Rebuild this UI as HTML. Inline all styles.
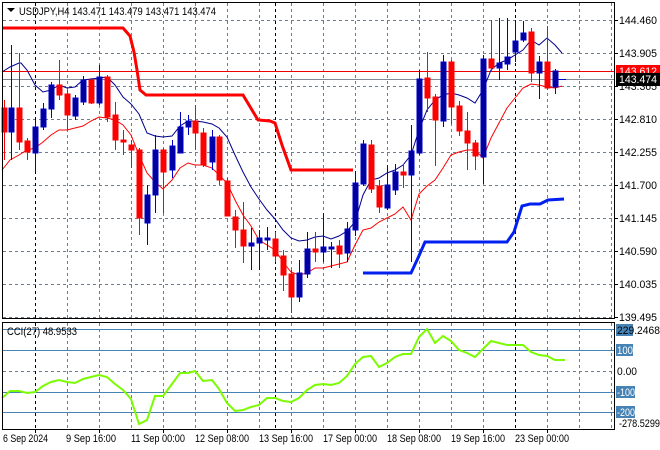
<!DOCTYPE html>
<html><head><meta charset="utf-8"><style>
html,body{margin:0;padding:0;background:#fff;}
svg{display:block;font-family:"Liberation Sans",sans-serif;}
</style></head><body>
<svg width="660" height="450" viewBox="0 0 660 450" xmlns="http://www.w3.org/2000/svg">
<rect width="660" height="450" fill="#fff"/>
<g stroke="#6f7c8c" stroke-width="1" stroke-dasharray="3,3" fill="none">
<path d="M3 20.5H614M3 53.5H614M3 86.5H614M3 119.5H614M3 152.5H614M3 185.5H614M3 218.5H614M3 251.5H614M3 284.5H614M3 317.5H614"/>
<path d="M67.5 3V318M99.5 3V318M131.5 3V318M163.5 3V318M195.5 3V318M227.5 3V318M259.5 3V318M291.5 3V318M323.5 3V318M355.5 3V318M387.5 3V318M419.5 3V318M451.5 3V318M483.5 3V318M547.5 3V318M579.5 3V318M611.5 3V318"/>
<path d="M67.5 323V428M99.5 323V428M131.5 323V428M163.5 323V428M195.5 323V428M227.5 323V428M259.5 323V428M291.5 323V428M323.5 323V428M355.5 323V428M387.5 323V428M419.5 323V428M451.5 323V428M483.5 323V428M547.5 323V428M579.5 323V428M611.5 323V428M3 371.5H614"/>
</g>
<g stroke="#000" stroke-width="1" stroke-dasharray="3,3">
<path d="M35.5 3V318M275.5 3V318M515.5 3V318M35.5 323V428M275.5 323V428M515.5 323V428"/>
</g>
<path d="M3 71.5H614" stroke="#e00" stroke-width="1"/>
<path d="M3 79.5H614" stroke="#7f8a96" stroke-width="1"/>
<polyline fill="none" stroke="#f00" stroke-width="3" points="3,28 123,28 130,36 134,52 137,70 140,90 146,95 243,95 252,110 258,120 270,121 275,123 282,145 291,170 353,170"/>
<polyline fill="none" stroke="#0020f0" stroke-width="3" points="363,273 411,273 418,258 425,242 507,242 514,232 522,206 530,204 540,204 548,200 564,199"/>
<polyline fill="none" stroke="#00008b" stroke-width="1" points="2,72 10,67 19,63 21,63 27,70 35,85 43,92 51,90 59,85 67,88 75,87 83,80 91,79 99,78 107,77 115,85 123,97 131,104 139,114 147,133 155,136 163,137 172,136 180,126 188,121 195,121 203,122 212,124 219,128 227,137 235,155 243,172 251,187 259,199 267,210 275,219 283,230 291,238 299,241 307,240 315,237 323,236 331,239 339,236 347,231 355,222 363,195 371,180 379,178 387,173 395,170 403,165 411,155 419,130 427,110 435,100 443,95 451,93 459,95 467,98 475,103 483,90 491,70 499,63 507,60 515,55 523,50 531,40 539,45 547,38 555,45 562,53"/>
<polyline fill="none" stroke="#f00" stroke-width="1" points="2,170 10,160 19,155 27,150 35,148 43,142 51,135 59,130 67,130 75,128 83,126 91,121 99,117 107,118 115,120 123,125 131,135 139,155 147,173 155,182 163,189 172,180 180,168 188,163 195,165 203,165 212,168 219,175 227,183 235,200 243,215 251,226 259,240 267,245 275,250 283,262 291,272 299,275 307,273 315,268 323,268 331,266 339,264 347,262 355,245 363,230 371,228 379,222 387,218 395,214 403,207 411,220 419,194 427,186 435,180 443,168 451,155 459,152 467,150 475,150 483,158 491,138 499,123 507,108 515,98 523,88 531,84 539,85 547,87 555,88 562,86"/>
<g stroke-width="1">
<g stroke="#f00" fill="#f00">
<path d="M4.5 100V160M19.5 53V150M27.5 138V160M59.5 60V100M67.5 90V130M91.5 78V104M107.5 75V122M115.5 102V150M123.5 130V155M131.5 140V168M139.5 148V235M163.5 148V213M195.5 105V150M203.5 128V167M219.5 135V185M227.5 178V205M235.5 210V248M243.5 202V263M275.5 232V262M283.5 250V291M291.5 270V313M315.5 232V262M339.5 240V268M371.5 140V193M379.5 180V213M403.5 164V188M427.5 52V112M435.5 94V166M451.5 60V124M459.5 101V136M467.5 112V170M475.5 140V170M491.5 20V72M531.5 28V82M547.5 26V90"/>
<rect x="2" y="108" width="5" height="24"/><rect x="17" y="108" width="5" height="34"/><rect x="25" y="141" width="5" height="11"/><rect x="57" y="85" width="5" height="10"/><rect x="65" y="94" width="5" height="21"/><rect x="89" y="80" width="5" height="23"/><rect x="105" y="77" width="5" height="40"/><rect x="113" y="115" width="5" height="25"/><rect x="121" y="140" width="5" height="2"/><rect x="129" y="145" width="5" height="5"/><rect x="137" y="150" width="5" height="68"/><rect x="161" y="150" width="5" height="22"/><rect x="193" y="121" width="5" height="12"/><rect x="201" y="133" width="5" height="32"/><rect x="217" y="137" width="5" height="43"/><rect x="225" y="181" width="5" height="35"/><rect x="233" y="217" width="5" height="13"/><rect x="241" y="230" width="5" height="16"/><rect x="273" y="239" width="5" height="17"/><rect x="281" y="256" width="5" height="19"/><rect x="289" y="274" width="5" height="23"/><rect x="313" y="249" width="5" height="3"/><rect x="337" y="246" width="5" height="8"/><rect x="369" y="145" width="5" height="44"/><rect x="377" y="186" width="5" height="21"/><rect x="401" y="172" width="5" height="3"/><rect x="425" y="78" width="5" height="20"/><rect x="433" y="97" width="5" height="23"/><rect x="449" y="62" width="5" height="45"/><rect x="457" y="106" width="5" height="25"/><rect x="465" y="131" width="5" height="12"/><rect x="473" y="143" width="5" height="13"/><rect x="489" y="59" width="5" height="9"/><rect x="529" y="32" width="5" height="41"/><rect x="545" y="62" width="5" height="26"/>
</g>
<g stroke="#0000c8" fill="#0000a0">
<path d="M11.5 45V160M35.5 120V172M43.5 103V130M51.5 82V118M75.5 95V120M83.5 76V105M99.5 65V105M147.5 185V245M155.5 135V213M172.5 140V178M180.5 112V153M188.5 115V135M212.5 130V170M251.5 228V270M259.5 230V270M267.5 227V250M299.5 260V302M307.5 232V278M323.5 213V262M331.5 242V268M347.5 222V262M355.5 171V236M363.5 140V186M387.5 165V210M395.5 164V195M411.5 125V262M419.5 70V155M443.5 55V127M483.5 55V184M499.5 18V80M507.5 18V70M515.5 20V62M523.5 21V42M539.5 56V99M555.5 69V94"/>
<rect x="9" y="108" width="5" height="24"/><rect x="33" y="127" width="5" height="26"/><rect x="41" y="109" width="5" height="18"/><rect x="49" y="85" width="5" height="24"/><rect x="73" y="98" width="5" height="18"/><rect x="81" y="80" width="5" height="22"/><rect x="97" y="77" width="5" height="26"/><rect x="145" y="195" width="5" height="28"/><rect x="153" y="150" width="5" height="45"/><rect x="170" y="146" width="5" height="24"/><rect x="178" y="127" width="5" height="26"/><rect x="186" y="121" width="5" height="6"/><rect x="210" y="137" width="5" height="25"/><rect x="249" y="243" width="5" height="3"/><rect x="257" y="238" width="5" height="5"/><rect x="265" y="238" width="5" height="2"/><rect x="297" y="273" width="5" height="24"/><rect x="305" y="249" width="5" height="25"/><rect x="321" y="247" width="5" height="5"/><rect x="329" y="247" width="5" height="2"/><rect x="345" y="229" width="5" height="24"/><rect x="353" y="183" width="5" height="47"/><rect x="361" y="144" width="5" height="40"/><rect x="385" y="185" width="5" height="23"/><rect x="393" y="172" width="5" height="18"/><rect x="409" y="151" width="5" height="24"/><rect x="417" y="79" width="5" height="74"/><rect x="441" y="62" width="5" height="59"/><rect x="481" y="59" width="5" height="98"/><rect x="497" y="63" width="5" height="5"/><rect x="505" y="57" width="5" height="7"/><rect x="513" y="41" width="5" height="11"/><rect x="521" y="33" width="5" height="7"/><rect x="537" y="62" width="5" height="11"/><rect x="553" y="71" width="5" height="16"/>
<path d="M558 79.5H566" stroke="#0000c8"/>
</g>
</g>
<path d="M3 329.5H614M3 350.5H614M3 392.5H614M3 412.5H614" stroke="#4682b4" stroke-width="1"/>
<polyline fill="none" stroke="#7cfc00" stroke-width="2" points="2,398 10,391 19,391 27,393 35,392 43,386 51,382 59,380 67,382 75,383 83,379 91,377 99,375 107,377 115,384 123,390 131,399 139,424 147,420 155,396 163,396 172,384 180,373 188,373 195,371 203,381 212,380 219,389 227,403 235,411 243,410 251,407 259,405 267,398 275,398 283,401 291,402 299,398 307,390 315,385 323,384 331,385 339,383 347,376 355,364 363,357 371,356 379,367 387,363 395,357 403,354 411,354 419,337 427,329 435,343 443,336 451,341 459,350 467,353 475,357 483,349 491,341 499,343 507,345 515,345 523,345 531,352 539,355 547,356 555,360 565,360"/>
<g fill="none" stroke="#000" stroke-width="1">
<path d="M2.5 2V318.5H614.5V2"/>
<path d="M2.5 322.5H614.5V429.5H2.5Z"/>
<path d="M2.5 2.5H614.5"/>
</g>
<g stroke="#000"><path d="M614 20.5h4M614 53.5h4M614 86.5h4M614 119.5h4M614 152.5h4M614 185.5h4M614 218.5h4M614 251.5h4M614 284.5h4M614 317.5h4M35.5 429v4M99.5 429v4M163.5 429v4M227.5 429v4M291.5 429v4M355.5 429v4M419.5 429v4M483.5 429v4M547.5 429v4"/></g>
<path d="M7 8h8l-4 4z" fill="#000"/>
<text x="19" y="15" font-size="11" fill="#000" textLength="197" lengthAdjust="spacingAndGlyphs">USDJPY,H4  143.471 143.479 143.471 143.474</text>
<text x="7" y="335" font-size="11" fill="#000" textLength="70" lengthAdjust="spacingAndGlyphs">CCI(27) 48.9533</text>
<g font-size="11" fill="#000">
<text x="619" y="24" textLength="38" lengthAdjust="spacingAndGlyphs">144.460</text>
<text x="619" y="57" textLength="38" lengthAdjust="spacingAndGlyphs">143.905</text>
<text x="619" y="90" textLength="38" lengthAdjust="spacingAndGlyphs">143.365</text>
<text x="619" y="123" textLength="38" lengthAdjust="spacingAndGlyphs">142.810</text>
<text x="619" y="156" textLength="38" lengthAdjust="spacingAndGlyphs">142.255</text>
<text x="619" y="189" textLength="38" lengthAdjust="spacingAndGlyphs">141.700</text>
<text x="619" y="222" textLength="38" lengthAdjust="spacingAndGlyphs">141.145</text>
<text x="619" y="255" textLength="38" lengthAdjust="spacingAndGlyphs">140.590</text>
<text x="619" y="288" textLength="38" lengthAdjust="spacingAndGlyphs">140.035</text>
<text x="619" y="321" textLength="38" lengthAdjust="spacingAndGlyphs">139.495</text>
</g>
<rect x="616" y="65" width="44" height="12" fill="#f00"/>
<text x="619" y="75" font-size="11" fill="#fff" textLength="38" lengthAdjust="spacingAndGlyphs">143.612</text>
<rect x="616" y="73" width="44" height="13" fill="#000"/>
<text x="619" y="83" font-size="11" fill="#fff" textLength="38" lengthAdjust="spacingAndGlyphs">143.474</text>
<g font-size="11">
<rect x="616" y="324" width="17" height="12" fill="#4682b4"/>
<text x="617" y="334" fill="#000" textLength="43" lengthAdjust="spacingAndGlyphs">229.2468</text>
<rect x="616" y="344" width="17" height="12" fill="#4682b4"/>
<text x="617" y="354" fill="#fff" textLength="16" lengthAdjust="spacingAndGlyphs">100</text>
<text x="617" y="375" fill="#000" textLength="20" lengthAdjust="spacingAndGlyphs">0.00</text>
<rect x="616" y="386" width="19" height="12" fill="#4682b4"/>
<text x="617" y="396" fill="#fff" textLength="18" lengthAdjust="spacingAndGlyphs">-100</text>
<rect x="616" y="406" width="19" height="12" fill="#4682b4"/>
<text x="617" y="416" fill="#fff" textLength="18" lengthAdjust="spacingAndGlyphs">-200</text>
<text x="619" y="427" fill="#000" textLength="41" lengthAdjust="spacingAndGlyphs">-278.5299</text>
</g>
<g font-size="11" fill="#000">
<text x="3" y="442" textLength="45" lengthAdjust="spacingAndGlyphs">6 Sep 2024</text>
<text x="66" y="442" textLength="50" lengthAdjust="spacingAndGlyphs">9 Sep 16:00</text>
<text x="131" y="442" textLength="54" lengthAdjust="spacingAndGlyphs">11 Sep 00:00</text>
<text x="195" y="442" textLength="54" lengthAdjust="spacingAndGlyphs">12 Sep 08:00</text>
<text x="259" y="442" textLength="54" lengthAdjust="spacingAndGlyphs">13 Sep 16:00</text>
<text x="323" y="442" textLength="54" lengthAdjust="spacingAndGlyphs">17 Sep 00:00</text>
<text x="387" y="442" textLength="54" lengthAdjust="spacingAndGlyphs">18 Sep 08:00</text>
<text x="451" y="442" textLength="54" lengthAdjust="spacingAndGlyphs">19 Sep 16:00</text>
<text x="515" y="442" textLength="54" lengthAdjust="spacingAndGlyphs">23 Sep 00:00</text>
</g>
</svg>
</body></html>
